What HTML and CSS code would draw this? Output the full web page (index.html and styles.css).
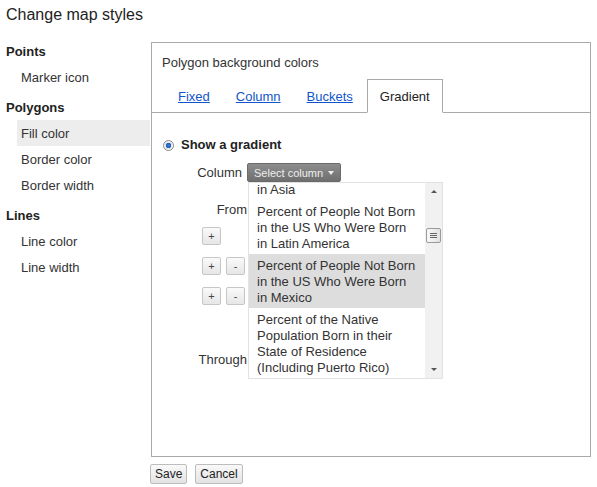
FILE: index.html
```html
<!DOCTYPE html>
<html lang="en">
<head>
    <meta charset="UTF-8">
    <title>Change map styles</title>
    <link rel="stylesheet" href="styles.css">
</head>
<body>
    <div class="page">
        <h1 class="title">Change map styles</h1>
        <div class="layout">
            <div class="sidebar">
                <div class="side-head first">Points</div>
                <div class="side-item">Marker icon</div>
                <div class="side-head">Polygons</div>
                <div class="side-item active">Fill color</div>
                <div class="side-item">Border color</div>
                <div class="side-item">Border width</div>
                <div class="side-head">Lines</div>
                <div class="side-item">Line color</div>
                <div class="side-item">Line width</div>
            </div>
            <div class="main">
                <div class="panel">
                    <div class="panel-title">Polygon background colors</div>
                    <div class="tabs">
                        <div class="tab"><a href="#">Fixed</a></div>
                        <div class="tab"><a href="#">Column</a></div>
                        <div class="tab"><a href="#">Buckets</a></div>
                        <div class="tab selected">Gradient</div>
                    </div>
                    <div class="tab-body">
                        <div class="radio-row"><span class="radio"></span>Show a gradient</div>
                        <div class="grad-form">
                            <div class="form-row column-row">
                                <span class="field-label">Column</span>
                                <div class="select-wrap">
                                    <button class="select-btn">Select column <span class="caret"></span></button>
                                    <div class="col-menu">
                                        <div class="menu-list">
                                            <div class="menu-inner">
                                                <div class="menu-item">Percent of People Not Born in the US Who Were Born in Asia</div>
                                                <div class="menu-item">Percent of People Not Born in the US Who Were Born in Latin America</div>
                                                <div class="menu-item hover">Percent of People Not Born in the US Who Were Born in Mexico</div>
                                                <div class="menu-item">Percent of the Native Population Born in their State of Residence (Including Puerto Rico)</div>
                                            </div>
                                        </div>
                                        <div class="scrollbar">
                                            <div class="sb-btn"><span class="arrow-up"></span></div>
                                            <div class="sb-track"><div class="sb-thumb"><span class="grip"></span></div></div>
                                            <div class="sb-btn"><span class="arrow-down"></span></div>
                                        </div>
                                    </div>
                                </div>
                            </div>
                            <div class="form-row from-row"><span class="field-label wide">From</span></div>
                            <div class="stop-row first"><button class="mini">+</button></div>
                            <div class="stop-row"><button class="mini">+</button><button class="mini">-</button></div>
                            <div class="stop-row"><button class="mini">+</button><button class="mini">-</button></div>
                            <div class="form-row through-row"><span class="field-label wide">Through</span></div>
                        </div>
                    </div>
                </div>
                <div class="actions">
                    <button class="btn">Save</button>
                    <button class="btn">Cancel</button>
                </div>
            </div>
        </div>
    </div>
</body>
</html>
```

FILE: styles.css
```css
body {
    margin: 0;
    font-family: "Liberation Sans", Arial, sans-serif;
    font-size: 13px;
    color: #222;
    background: #fff;
}

.page {
    padding: 0 6px;
}

.title {
    margin: 0;
    padding-top: 5px;
    height: 33px;
    font-size: 16px;
    font-weight: normal;
    line-height: 20px;
}

.layout {
    display: flex;
}

/* left menu */
.sidebar {
    width: 144px;
    flex: none;
}

.side-head {
    font-weight: bold;
    padding-top: 1px;
    line-height: 25px;
    margin-top: 4px;
}

.side-head.first {
    margin-top: 0;
}

.side-item {
    margin-left: 11px;
    padding: 1px 0 0 4px;
    line-height: 25px;
    color: #333;
}

.side-item.active {
    background: #ededed;
}

.main {
    flex: none;
    width: 441px;
}

.panel {
    margin: 4px 0 0 1px;
    height: 415px;
    box-sizing: border-box;
    border: 1px solid #aaa;
}

.panel-title {
    padding: 12px 10px 0;
    line-height: 16px;
    color: #333;
}

/* tabs */
.tabs {
    display: flex;
    margin-top: 8px;
    padding-left: 13px;
    border-bottom: 1px solid #aaa;
}

.tab {
    padding: 1px 12px 0;
    line-height: 31px;
    border: 1px solid transparent;
    margin-bottom: -1px;
}

.tab a {
    color: #15c;
    text-decoration: underline;
}

.tab.selected {
    margin-left: 1px;
    padding: 1px 12px 0;
    border-color: #aaa;
    border-bottom-color: #fff;
    background: #fff;
}

.tab-body {
    padding: 24px 0 0 11px;
}

.radio-row {
    display: flex;
    align-items: center;
    font-weight: bold;
    line-height: 16px;
}

.radio {
    width: 9px;
    height: 9px;
    margin-right: 7px;
    border: 1px solid #8a8a8a;
    border-radius: 50%;
    background: radial-gradient(circle, #3b7fd9 0, #1f5fb8 2.5px, #e8e8e8 3px, #fafafa 5px);
}

/* gradient form */
.form-row {
    display: flex;
    align-items: center;
}

.field-label {
    width: 79px;
    margin-right: 5px;
    text-align: right;
    color: #333;
}

.field-label.wide {
    width: 84px;
    margin-right: 0;
}

.column-row {
    margin-top: 10px;
    height: 19px;
}

.from-row {
    margin-top: 20px;
    line-height: 16px;
}

.through-row {
    margin-top: 47px;
    line-height: 16px;
}

.stop-row {
    display: flex;
    gap: 5px;
    margin-top: 12px;
    padding-left: 39px;
}

.stop-row.first {
    margin-top: 9px;
}

.mini {
    width: 19px;
    height: 18px;
    padding: 0;
    border: 1px solid #c6c6c6;
    border-radius: 2px;
    background: linear-gradient(#fafafa, #e6e6e6);
    font-family: "Liberation Sans", Arial, sans-serif;
    font-size: 11px;
    color: #444;
}

.select-wrap {
    position: relative;
}

.select-btn {
    display: flex;
    align-items: center;
    height: 19px;
    padding: 0 6px 0 6px;
    border: 1px solid #6a6a6a;
    border-radius: 2px;
    background: linear-gradient(#8d8d8d, #6f6f6f);
    color: #eee;
    font-family: "Liberation Sans", Arial, sans-serif;
    font-size: 11px;
    white-space: nowrap;
}

.caret {
    margin-left: 5px;
    border-left: 3px solid transparent;
    border-right: 3px solid transparent;
    border-top: 4px solid #eee;
}

/* dropdown of columns */
.col-menu {
    position: absolute;
    top: 100%;
    left: 1px;
    width: 195px;
    height: 197px;
    box-sizing: border-box;
    display: flex;
    border: 1px solid #e2e2e2;
    background: #fff;
}

.menu-list {
    flex: 1;
    overflow: hidden;
}

.menu-inner {
    margin-top: -37px;
}

.menu-item {
    padding: 4px 6px 2px 8px;
    line-height: 16px;
    color: #333;
}

.menu-item.hover {
    background: #ddd;
}

.scrollbar {
    width: 17px;
    display: flex;
    flex-direction: column;
    background: #f1f1f1;
}

.sb-btn {
    height: 17px;
    display: flex;
    align-items: center;
    justify-content: center;
}

.arrow-up {
    border-left: 3px solid transparent;
    border-right: 3px solid transparent;
    border-bottom: 3px solid #555;
}

.arrow-down {
    border-left: 3px solid transparent;
    border-right: 3px solid transparent;
    border-top: 3px solid #555;
}

.sb-track {
    flex: 1;
    padding-top: 28px;
}

.sb-thumb {
    height: 13px;
    margin: 0 1px;
    border: 1px solid #9a9a9a;
    border-radius: 2px;
    background: linear-gradient(90deg, #f8f8f8, #e2e2e2);
    display: flex;
    align-items: center;
    justify-content: center;
}

.grip {
    width: 7px;
    height: 5px;
    background: repeating-linear-gradient(#666 0 1px, transparent 1px 2px);
}

/* save / cancel */
.actions {
    display: flex;
    gap: 8px;
    margin-top: 7px;
}

.btn {
    height: 20px;
    padding: 0 4px;
    border: 1px solid #bdbdbd;
    border-radius: 2px;
    background: linear-gradient(#f9f9f9, #e3e3e3);
    font-family: "Liberation Sans", Arial, sans-serif;
    font-size: 12px;
    color: #222;
}
```
